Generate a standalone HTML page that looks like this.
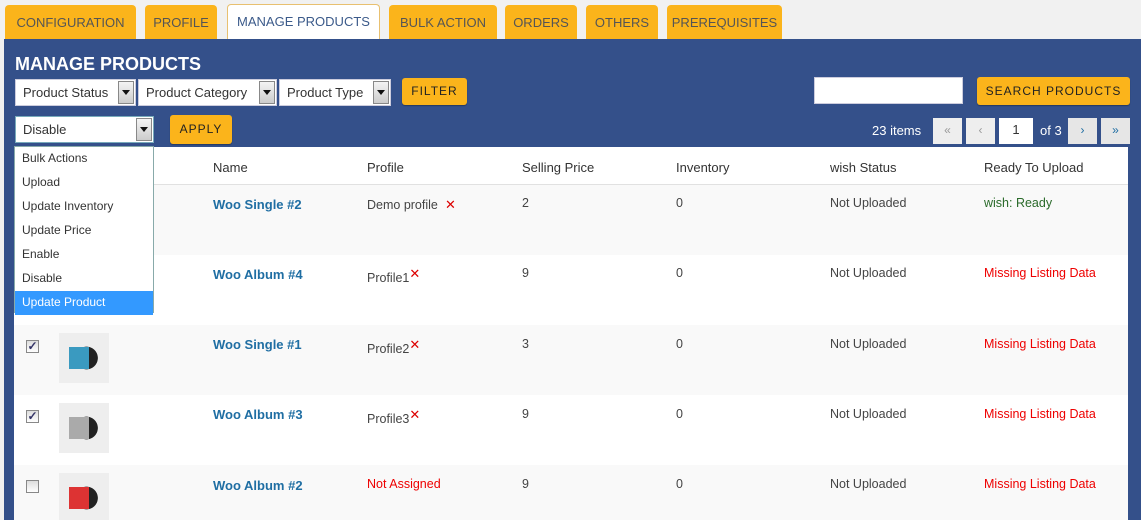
<!DOCTYPE html>
<html><head><meta charset="utf-8"><style>
*{margin:0;padding:0;box-sizing:border-box}
html{width:1141px;height:520px;overflow:hidden}
body{width:1141px;height:520px;overflow:hidden;background:#f1f1f1;font-family:"Liberation Sans",sans-serif;font-size:13px;color:#444;position:relative}
.a{position:absolute}
.tab{position:absolute;top:5px;height:35px;background:#fbb41b;border-radius:4px 4px 0 0;color:#555;font-size:13px;line-height:36px;text-align:center}
.tab.on{background:#fff;border:1px solid #e8c070;border-bottom:none;top:4px;color:#3b5a8a;line-height:34px}
.panel{left:4px;top:39px;width:1137px;height:481px;background:#34508a}
.sel{position:absolute;height:27px;background:#fff;border:1px solid #ccd;font-size:13px;color:#333;line-height:25px;padding-left:7px}
.sel i{position:absolute;right:1px;top:1px;width:16px;height:23px;background:linear-gradient(#f4f4f4,#ccc);border:1px solid #888}
.sel i:after{content:"";position:absolute;left:3px;top:8px;border:4px solid transparent;border-top:5px solid #111}
.btn{position:absolute;background:#fbb41b;border-radius:3px;color:#222;font-size:12px;letter-spacing:1px;text-align:center;box-shadow:0 1px 1px rgba(0,0,0,.3)}
.pg{position:absolute;top:118px;height:26px;width:29px;background:#eee;color:#999;text-align:center;line-height:24px;font-size:12px}
.row{position:absolute;left:14px;width:1114px;height:70px;overflow:hidden}
.c{position:absolute;font-size:12.5px}
.nm{color:#1f6ea3;font-weight:bold;font-size:13px}
.x{color:#d00;font-size:13px}
.red{color:#e00;}
.cb{position:absolute;left:12px;width:13px;height:13px;border:1px solid #888;background:linear-gradient(#ddd,#fff);font-size:12px;line-height:11px;color:#336;text-align:center;font-weight:bold}
.th{position:absolute;width:50px;height:50px;left:45px;background:#eee}
.dd{left:14px;top:146px;width:140px;height:167px;background:#fff;border:1px solid #8aa}
.dd div{height:24px;line-height:23px;padding-left:7px;font-size:12px;color:#333}
</style></head><body>
<div class="tab" style="left:5px;width:131px">CONFIGURATION</div>
<div class="tab" style="left:145px;width:72px">PROFILE</div>
<div class="tab on" style="left:227px;width:153px">MANAGE PRODUCTS</div>
<div class="tab" style="left:389px;width:108px">BULK ACTION</div>
<div class="tab" style="left:505px;width:72px">ORDERS</div>
<div class="tab" style="left:586px;width:72px">OTHERS</div>
<div class="tab" style="left:667px;width:115px">PREREQUISITES</div>
<div class="a panel"></div>
<div class="a" style="left:15px;top:54px;color:#fff;font-weight:bold;font-size:18px">MANAGE PRODUCTS</div>
<div class="sel" style="left:15px;top:79px;width:121px">Product Status<i></i></div>
<div class="sel" style="left:138px;width:139px;top:79px">Product Category<i></i></div>
<div class="sel" style="left:279px;width:112px;top:79px">Product Type<i></i></div>
<div class="btn" style="left:402px;top:78px;width:65px;height:27px;line-height:27px">FILTER</div>
<div class="a" style="left:814px;top:77px;width:149px;height:27px;background:#fff;border:1px solid #ccd"></div>
<div class="btn" style="left:977px;top:77px;width:153px;height:28px;line-height:29px">SEARCH PRODUCTS</div>
<div class="sel" style="left:15px;top:116px;width:139px;border-color:#7ab">Disable<i></i></div>
<div class="btn" style="left:170px;top:115px;width:62px;height:29px;line-height:29px">APPLY</div>
<div class="a" style="left:872px;top:123px;color:#fff;font-size:13px">23 items</div>
<div class="pg" style="left:933px">«</div>
<div class="pg" style="left:966px">‹</div>
<div class="pg" style="left:999px;width:34px;background:#fff;color:#333;font-size:13px">1</div>
<div class="a" style="left:1040px;top:123px;color:#fff">of 3</div>
<div class="pg" style="left:1068px;background:#e6e6e6;color:#1f6ea3">›</div>
<div class="pg" style="left:1101px;background:#e6e6e6;color:#1f6ea3">»</div>
<div class="a" style="left:14px;top:147px;width:1114px;height:38px;background:#fff;border-bottom:1px solid #e1e1e1"></div>
<div class="c" style="left:213px;top:160px;color:#333;font-size:13px">Name</div>
<div class="c" style="left:367px;top:160px;color:#333;font-size:13px">Profile</div>
<div class="c" style="left:522px;top:160px;color:#333;font-size:13px">Selling Price</div>
<div class="c" style="left:676px;top:160px;color:#333;font-size:13px">Inventory</div>
<div class="c" style="left:830px;top:160px;color:#333;font-size:13px">wish Status</div>
<div class="c" style="left:984px;top:160px;color:#333;font-size:13px">Ready To Upload</div>

<div class="row" style="top:185px;background:#f9f9f9"></div>
<div class="row" style="top:255px;background:#fff"></div>
<div class="row" style="top:325px;background:#f9f9f9"><div class="cb" style="top:15px">✓</div><div class="th" style="top:8px;background:radial-gradient(circle at 55% 50%,#222 0 30%,#eee 31%)"><div style="position:absolute;left:10px;top:14px;width:20px;height:22px;background:#3a9ac0"></div></div></div>
<div class="row" style="top:395px;background:#fff"><div class="cb" style="top:15px">✓</div><div class="th" style="top:8px;background:radial-gradient(circle at 55% 50%,#222 0 30%,#eee 31%)"><div style="position:absolute;left:10px;top:14px;width:20px;height:22px;background:#aaa"></div></div></div>
<div class="row" style="top:465px;height:55px;background:#f9f9f9"><div class="cb" style="top:15px"></div><div class="th" style="top:8px;background:radial-gradient(circle at 55% 50%,#222 0 30%,#eee 31%)"><div style="position:absolute;left:10px;top:14px;width:20px;height:22px;background:#d33"></div></div></div>

<div class="c nm" style="left:213px;top:197px">Woo Single #2</div>
<div class="c" style="left:367px;top:197px">Demo profile <span class="x">&nbsp;✕</span></div>
<div class="c" style="left:522px;top:196px">2</div><div class="c" style="left:676px;top:196px">0</div>
<div class="c" style="left:830px;top:196px">Not Uploaded</div>
<div class="c" style="left:984px;top:196px;color:#2a6a2a">wish: Ready</div>

<div class="c nm" style="left:213px;top:267px">Woo Album #4</div>
<div class="c" style="left:367px;top:266px">Profile1<span class="x" style="vertical-align:4px">✕</span></div>
<div class="c" style="left:522px;top:266px">9</div><div class="c" style="left:676px;top:266px">0</div>
<div class="c" style="left:830px;top:266px">Not Uploaded</div>
<div class="c red" style="left:984px;top:266px">Missing Listing Data</div>

<div class="c nm" style="left:213px;top:337px">Woo Single #1</div>
<div class="c" style="left:367px;top:337px">Profile2<span class="x" style="vertical-align:4px">✕</span></div>
<div class="c" style="left:522px;top:337px">3</div><div class="c" style="left:676px;top:337px">0</div>
<div class="c" style="left:830px;top:337px">Not Uploaded</div>
<div class="c red" style="left:984px;top:337px">Missing Listing Data</div>

<div class="c nm" style="left:213px;top:407px">Woo Album #3</div>
<div class="c" style="left:367px;top:407px">Profile3<span class="x" style="vertical-align:4px">✕</span></div>
<div class="c" style="left:522px;top:407px">9</div><div class="c" style="left:676px;top:407px">0</div>
<div class="c" style="left:830px;top:407px">Not Uploaded</div>
<div class="c red" style="left:984px;top:407px">Missing Listing Data</div>

<div class="c nm" style="left:213px;top:478px">Woo Album #2</div>
<div class="c red" style="left:367px;top:477px">Not Assigned</div>
<div class="c" style="left:522px;top:477px">9</div><div class="c" style="left:676px;top:477px">0</div>
<div class="c" style="left:830px;top:477px">Not Uploaded</div>
<div class="c red" style="left:984px;top:477px">Missing Listing Data</div>

<div class="a dd">
<div>Bulk Actions</div><div>Upload</div><div>Update Inventory</div><div>Update Price</div><div>Enable</div><div>Disable</div><div style="background:#3399ff;color:#fff">Update Product</div>
</div>
</body></html>
